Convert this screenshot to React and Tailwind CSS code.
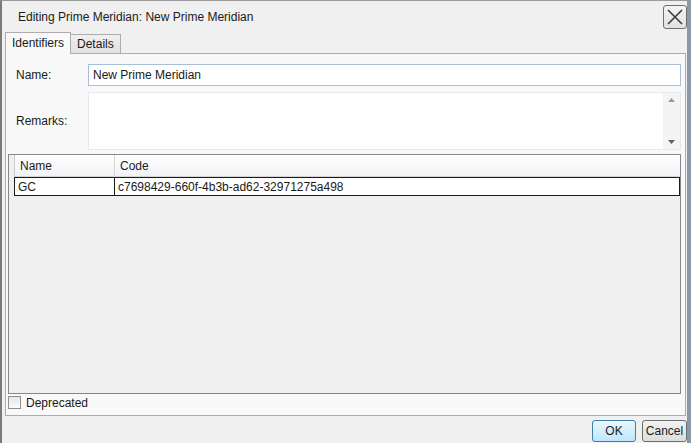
export default function App() {
  const font = { fontFamily: '"Liberation Sans", Arial, sans-serif' };
  return (
    <div
      className="w-[691px] h-[443px] bg-[#f0f0f0] flex flex-col border-l-2 border-t border-r-4 border-l-[#7a7a7a] border-t-[#9a9a9a] border-r-[#8a97a4] text-[12px] text-[#1a1a1a] overflow-hidden"
      style={font}
    >
      {/* Title bar */}
      <div className="h-[30px] flex items-center justify-between pl-[16px] pr-[0px] shrink-0">
        <span className="pt-[1px]">Editing Prime Meridian: New Prime Meridian</span>
        <div className="w-[24px] h-[24px] mt-[1px] border border-[#6f6f6f] rounded-[3px] bg-gradient-to-b from-[#f4f4f4] to-[#e1e1e1] flex items-center justify-center">
          <svg width="18" height="18" viewBox="0 0 18 18">
            <path d="M2 2 L16 16 M16 2 L2 16" stroke="#3c3c3c" strokeWidth="1.6" fill="none" />
          </svg>
        </div>
      </div>

      {/* Tabs */}
      <div className="h-[22px] flex items-end pl-[3px] shrink-0 relative z-10">
        <div className="h-[22px] px-[6px] flex items-center border border-b-0 border-[#acacac] bg-[#f9f9f9] -mb-[1px] pb-[1px]">
          Identifiers
        </div>
        <div className="h-[19px] px-[6px] flex items-center border border-l-0 border-b-0 border-[#acacac] bg-gradient-to-b from-[#f0f0f0] to-[#e0e0e0]">
          Details
        </div>
      </div>

      {/* Tab panel */}
      <div className="ml-[3px] mr-[1px] h-[363px] border border-[#acacac] bg-[#f9f9f9] flex flex-col pt-[10px] pl-[2px] pr-[4px] shrink-0">
        <div className="flex items-center h-[22px] ml-[8px]">
          <span className="w-[72px]">Name:</span>
          <div className="flex-1 h-[22px] border border-[#a9bfd6] bg-white flex items-center pl-[4px]">
            New Prime Meridian
          </div>
        </div>
        <div className="flex items-center h-[58px] mt-[6px] ml-[8px]">
          <span className="w-[72px]">Remarks:</span>
          <div className="flex-1 h-[58px] border border-[#e3e9ef] bg-white flex justify-end">
            <div className="w-[17px] h-full bg-[#f4f4f4] flex flex-col items-center justify-between py-[5px]">
              <svg width="7" height="4" viewBox="0 0 7 4"><path d="M0 4 L3.5 0 L7 4 Z" fill="#9a9a9a" /></svg>
              <svg width="7" height="4" viewBox="0 0 7 4"><path d="M0 0 L3.5 4 L7 0 Z" fill="#606060" /></svg>
            </div>
          </div>
        </div>

        {/* Grid */}
        <div className="mt-[4px] h-[240px] border border-[#828790] bg-[#f0f0f0] flex flex-col pl-[5px] pr-[0px] ml-[0px]">
          <div className="h-[22px] flex bg-gradient-to-b from-[#ffffff] to-[#f1f2f4] border-b border-[#d5d5d5] border-l border-l-[#c9c9c9]">
            <div className="w-[100px] border-r border-[#d5d5d5] flex items-center pl-[5px]">Name</div>
            <div className="flex-1 flex items-center pl-[5px]">Code</div>
          </div>
          <div className="h-[19px] flex bg-white border border-[#1a1a1a] -ml-[0px]">
            <div className="w-[100px] border-r border-[#1a1a1a] flex items-center pl-[3px]">GC</div>
            <div className="flex-1 flex items-center pl-[3px]">c7698429-660f-4b3b-ad62-32971275a498</div>
          </div>
        </div>

        <div className="flex items-center mt-[1px] h-[15px]">
          <div className="w-[13px] h-[13px] border border-[#8e8f8f] bg-gradient-to-b from-[#e6e6e6] to-[#fbfbfb]" />
          <span className="ml-[5px]">Deprecated</span>
        </div>
      </div>

      {/* Bottom buttons */}
      <div className="flex justify-end items-start pt-[4px] pr-[0px] gap-[6px]">
        <div className="w-[44px] h-[22px] border border-[#3c7fb1] rounded-[3px] bg-gradient-to-b from-[#eaf6fd] to-[#bee6fd] flex items-center justify-center">
          OK
        </div>
        <div className="w-[45px] h-[22px] border border-[#707070] rounded-[3px] bg-gradient-to-b from-[#f2f2f2] to-[#dddddd] flex items-center justify-center">
          Cancel
        </div>
      </div>
    </div>
  );
}
